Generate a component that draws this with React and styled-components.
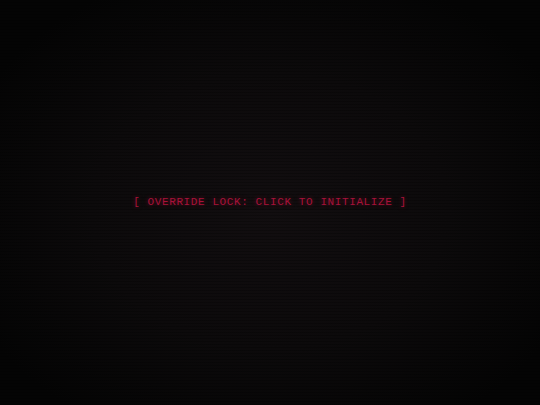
import React from 'react';
import styled, { createGlobalStyle } from 'styled-components';

const GlobalStyle = createGlobalStyle`
  html, body {
    margin: 0;
    padding: 0;
    background: #040404;
  }
  #root {
    height: 100vh;
  }
`;

const Screen = styled.main`
  position: relative;
  height: 100vh;
  display: flex;
  align-items: center;
  justify-content: center;
  overflow: hidden;
  background:
    repeating-linear-gradient(0deg, rgba(0, 0, 0, 0.25) 0 1px, transparent 1px 3px),
    radial-gradient(ellipse 60% 62% at 50% 52%, #120e10 0%, #0c0a0b 55%, #040404 100%);
`;

const LockButton = styled.button`
  margin-bottom: 2px;
  padding: 0;
  border: none;
  background: transparent;
  cursor: pointer;
  font-family: "Liberation Mono", "DejaVu Sans Mono", monospace;
  font-size: 11px;
  letter-spacing: 0.6px;
  color: #a8123a;
  text-shadow: 0 0 4px rgba(200, 16, 56, 0.5);
  text-transform: uppercase;
  white-space: pre;

  &:hover {
    color: #e0204c;
  }
`;

const App = () => {
  return (
    <>
      <GlobalStyle />
      <Screen>
        <LockButton type="button">[ OVERRIDE LOCK: CLICK TO INITIALIZE ]</LockButton>
      </Screen>
    </>
  );
};

export default App;
